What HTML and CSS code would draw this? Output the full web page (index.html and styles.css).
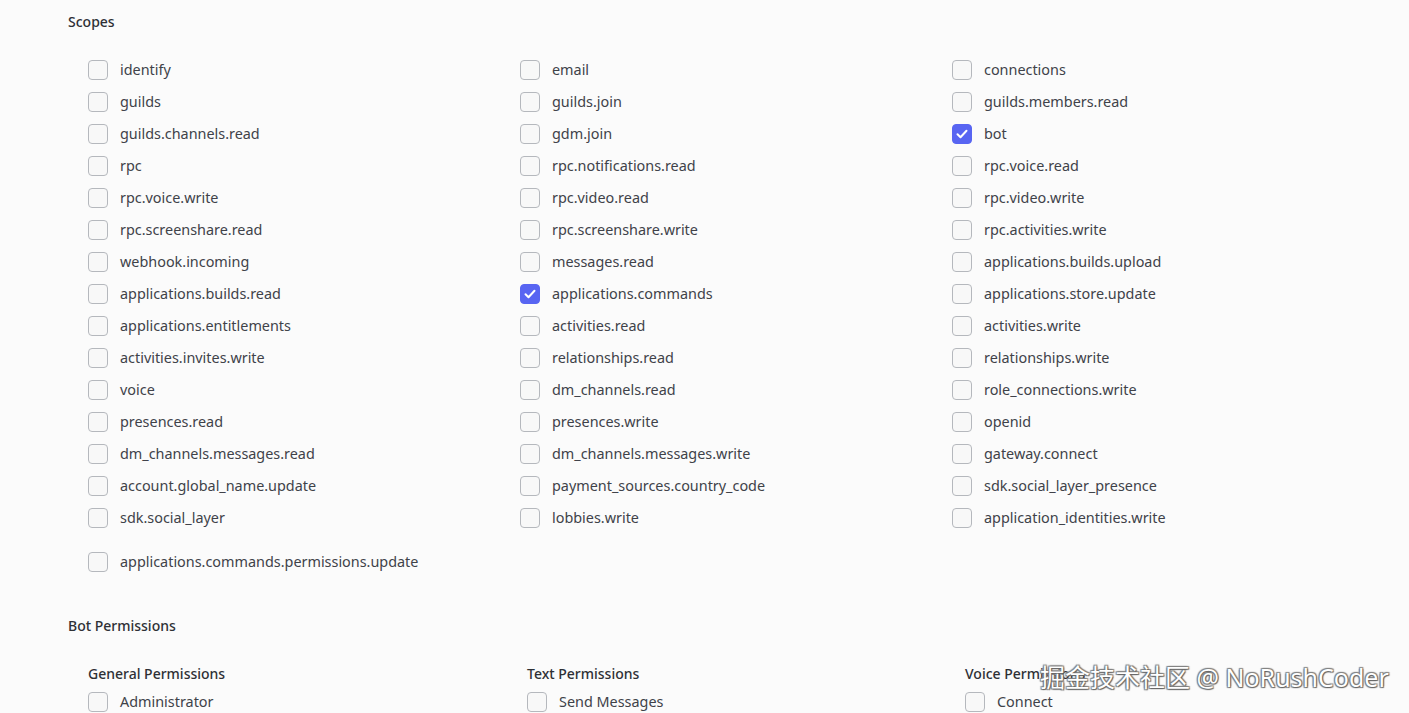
FILE: index.html
```html
<!DOCTYPE html>
<html lang="en">
<head>
<meta charset="utf-8">
<title>OAuth2 URL Generator</title>
<link rel="stylesheet" href="styles.css">
</head>
<body>
<main class="page">
  <h2 class="section-title">Scopes</h2>
  <div class="scope-grid">
    <label class="check"><span class="box"></span><span class="txt">identify</span></label>
    <label class="check"><span class="box"></span><span class="txt">email</span></label>
    <label class="check"><span class="box"></span><span class="txt">connections</span></label>
    <label class="check"><span class="box"></span><span class="txt">guilds</span></label>
    <label class="check"><span class="box"></span><span class="txt">guilds.join</span></label>
    <label class="check"><span class="box"></span><span class="txt">guilds.members.read</span></label>
    <label class="check"><span class="box"></span><span class="txt">guilds.channels.read</span></label>
    <label class="check"><span class="box"></span><span class="txt">gdm.join</span></label>
    <label class="check"><span class="box on"><svg viewBox="0 0 20 20" width="20" height="20"><path d="M5.5 10.2l3 3 6-6.4" fill="none" stroke="#fff" stroke-width="2" stroke-linecap="round" stroke-linejoin="round"/></svg></span><span class="txt">bot</span></label>
    <label class="check"><span class="box"></span><span class="txt">rpc</span></label>
    <label class="check"><span class="box"></span><span class="txt">rpc.notifications.read</span></label>
    <label class="check"><span class="box"></span><span class="txt">rpc.voice.read</span></label>
    <label class="check"><span class="box"></span><span class="txt">rpc.voice.write</span></label>
    <label class="check"><span class="box"></span><span class="txt">rpc.video.read</span></label>
    <label class="check"><span class="box"></span><span class="txt">rpc.video.write</span></label>
    <label class="check"><span class="box"></span><span class="txt">rpc.screenshare.read</span></label>
    <label class="check"><span class="box"></span><span class="txt">rpc.screenshare.write</span></label>
    <label class="check"><span class="box"></span><span class="txt">rpc.activities.write</span></label>
    <label class="check"><span class="box"></span><span class="txt">webhook.incoming</span></label>
    <label class="check"><span class="box"></span><span class="txt">messages.read</span></label>
    <label class="check"><span class="box"></span><span class="txt">applications.builds.upload</span></label>
    <label class="check"><span class="box"></span><span class="txt">applications.builds.read</span></label>
    <label class="check"><span class="box on"><svg viewBox="0 0 20 20" width="20" height="20"><path d="M5.5 10.2l3 3 6-6.4" fill="none" stroke="#fff" stroke-width="2" stroke-linecap="round" stroke-linejoin="round"/></svg></span><span class="txt">applications.commands</span></label>
    <label class="check"><span class="box"></span><span class="txt">applications.store.update</span></label>
    <label class="check"><span class="box"></span><span class="txt">applications.entitlements</span></label>
    <label class="check"><span class="box"></span><span class="txt">activities.read</span></label>
    <label class="check"><span class="box"></span><span class="txt">activities.write</span></label>
    <label class="check"><span class="box"></span><span class="txt">activities.invites.write</span></label>
    <label class="check"><span class="box"></span><span class="txt">relationships.read</span></label>
    <label class="check"><span class="box"></span><span class="txt">relationships.write</span></label>
    <label class="check"><span class="box"></span><span class="txt">voice</span></label>
    <label class="check"><span class="box"></span><span class="txt">dm_channels.read</span></label>
    <label class="check"><span class="box"></span><span class="txt">role_connections.write</span></label>
    <label class="check"><span class="box"></span><span class="txt">presences.read</span></label>
    <label class="check"><span class="box"></span><span class="txt">presences.write</span></label>
    <label class="check"><span class="box"></span><span class="txt">openid</span></label>
    <label class="check"><span class="box"></span><span class="txt">dm_channels.messages.read</span></label>
    <label class="check"><span class="box"></span><span class="txt">dm_channels.messages.write</span></label>
    <label class="check"><span class="box"></span><span class="txt">gateway.connect</span></label>
    <label class="check"><span class="box"></span><span class="txt">account.global_name.update</span></label>
    <label class="check"><span class="box"></span><span class="txt">payment_sources.country_code</span></label>
    <label class="check"><span class="box"></span><span class="txt">sdk.social_layer_presence</span></label>
    <label class="check"><span class="box"></span><span class="txt">sdk.social_layer</span></label>
    <label class="check"><span class="box"></span><span class="txt">lobbies.write</span></label>
    <label class="check"><span class="box"></span><span class="txt">application_identities.write</span></label>
  </div>
  <div class="scope-extra">
    <label class="check"><span class="box"></span><span class="txt">applications.commands.permissions.update</span></label>
  </div>

  <h2 class="section-title bot-title">Bot Permissions</h2>
  <div class="perm-grid">
    <div class="perm-col">
      <h3 class="perm-title">General Permissions</h3>
      <label class="check"><span class="box"></span><span class="txt">Administrator</span></label>
    </div>
    <div class="perm-col">
      <h3 class="perm-title">Text Permissions</h3>
      <label class="check"><span class="box"></span><span class="txt">Send Messages</span></label>
    </div>
    <div class="perm-col">
      <h3 class="perm-title">Voice Permissions</h3>
      <label class="check"><span class="box"></span><span class="txt">Connect</span></label>
    </div>
  </div>
</main>
<div class="watermark">掘金技术社区 @ NoRushCoder</div>
</body>
</html>
```
FILE: styles.css
```css
html, body {
  margin: 0;
  padding: 0;
}
body {
  background: #fbfbfb;
  font-family: "Noto Sans", "Liberation Sans", sans-serif;
  color: #404249;
  width: 1409px;
  height: 713px;
  overflow: hidden;
  position: relative;
}
.page {
  padding: 12px 0 0 68px;
}
.section-title {
  margin: 0;
  font-size: 14px;
  line-height: 20px;
  font-weight: 500;
  color: #2e3035;
}
.scope-grid {
  margin-top: 22px;
  padding-left: 20px;
  display: grid;
  grid-template-columns: 432px 432px 432px;
  grid-auto-rows: 32px;
}
.check {
  display: flex;
  align-items: center;
  gap: 12px;
  height: 32px;
  font-size: 14.4px;
  line-height: 20px;
  color: #404249;
}
.box {
  width: 18px;
  height: 18px;
  border: 1px solid #b5b8bd;
  border-radius: 4px;
  background: #f8f8f8;
  flex: none;
  display: flex;
  align-items: center;
  justify-content: center;
}
.box.on {
  background: #5865f2;
  border-color: #5865f2;
}
.box.on svg {
  flex: none;
}
.scope-extra {
  margin-top: 12px;
  padding-left: 20px;
}
.bot-title {
  margin-top: 38px;
}
.perm-grid {
  margin-top: 28px;
  padding-left: 20px;
  display: grid;
  grid-template-columns: 439px 438px 400px;
}
.perm-title {
  margin: 0;
  font-size: 14px;
  line-height: 20px;
  font-weight: 500;
  color: #2e3035;
}
.perm-col .check {
  height: 30px;
  margin-top: 3px;
}
.watermark {
  position: absolute;
  left: 1040px;
  top: 660px;
  font-family: "Noto Sans", "Noto Sans CJK SC", sans-serif;
  font-size: 25px;
  line-height: 34px;
  color: #ffffff;
  white-space: nowrap;
  text-shadow: 0 0 1px #555, 1px 1px 1px #666, -1px -1px 1px #888, 1px -1px 1px #888, -1px 1px 1px #888;
}
```
